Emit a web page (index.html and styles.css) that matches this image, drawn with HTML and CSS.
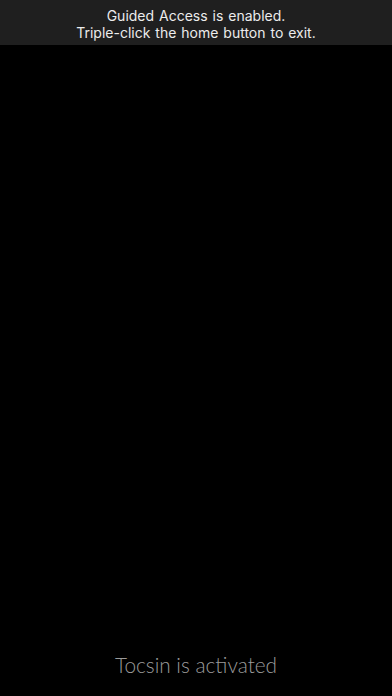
FILE: index.html
```html
<!DOCTYPE html>
<html>
<head>
<meta charset="utf-8">
<link rel="stylesheet" href="styles.css">
</head>
<body>
<div class="screen">
  <div class="banner">
    <div>Guided Access is enabled.</div>
    <div>Triple-click the home button to exit.</div>
  </div>
  <div class="content"></div>
  <div class="status">Tocsin is activated</div>
</div>
</body>
</html>
```
FILE: styles.css
```css
html, body {
  margin: 0;
  padding: 0;
  background: #000;
}
.screen {
  width: 392px;
  height: 696px;
  display: flex;
  flex-direction: column;
  background: #000;
}
.banner {
  height: 45px;
  box-sizing: border-box;
  padding-top: 7px;
  background: #1f1f1f;
  color: #ececec;
  font-family: "Inter", "Liberation Sans", sans-serif;
  font-size: 14px;
  line-height: 17px;
  word-spacing: 1px;
  text-align: center;
}
.content {
  flex: 1;
}
.status {
  height: 40px;
  box-sizing: border-box;
  padding-top: 0;
  text-align: center;
  color: #9a9a9a;
  font-family: "Lato", "Liberation Sans", sans-serif;
  font-weight: 300;
  font-size: 20.8px;
  line-height: 17px;
}
```
